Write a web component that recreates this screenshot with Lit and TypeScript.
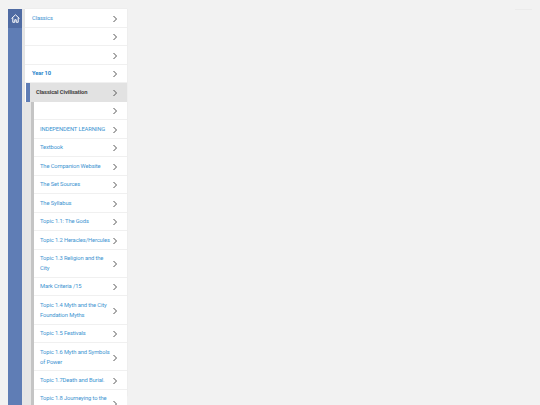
import { LitElement, html, css } from "lit";
import { customElement } from "lit/decorators.js";

const sub = ["", "INDEPENDENT LEARNING", "Textbook", "The Companion Website", "The Set Sources", "The Syllabus", "Topic 1.1: The Gods", "Topic 1.2 Heracles/Hercules", "Topic 1.3 Religion and the City", "Mark Criteria /15", "Topic 1.4 Myth and the City Foundation Myths", "Topic 1.5 Festivals", "Topic 1.6 Myth and Symbols of Power", "Topic 1.7Death and Burial.", "Topic 1.8 Journeying to the Underworld"];

const chev = html`<svg class="chev" viewBox="0 0 6 8" width="6" height="8"><path d="M1.5 1 L4.5 4 L1.5 7" fill="none" stroke="#555" stroke-width="1"/></svg>`;

@customElement("app-root")
export class AppRoot extends LitElement {
  static styles = css`
    :host { display: block; position: relative; height: 405px; overflow: hidden; background: #f2f2f2; font-family: "Roboto", "Noto Sans", sans-serif; }
    .page { display: flex; padding: 9px 0 0 8px; height: 396px; box-sizing: border-box; }
    .rail { width: 14px; background: #5f7db5; flex: none; height: 600px; }
    .home { height: 19px; background: #4f6ba3; display: flex; align-items: center; justify-content: center; }
    .gut { width: 3px; background: #e6e6e6; height: 600px; flex: none; }
    .panel { width: 102px; flex: none; background: #fff; box-shadow: 0 0 1px #ddd; }
    .row { display: flex; align-items: center; justify-content: space-between; height: 18.5px; box-sizing: border-box; border-bottom: 1px solid #f0f0f0; padding: 1.6px 9px 0 7px; font-size: 5.8px; letter-spacing: -0.12px; line-height: 9.8px; color: #3d94d1; }
    .bold { font-weight: 700; color: #2a86cc; }
    .active { background: #e2e2e2; margin-left: 1px; border-left: 4px solid #5f7db5; padding-left: 6px; color: #444; font-weight: 700; border-bottom: none; }
    .nested { display: flex; background: #e6e6e6; }
    .strip { width: 2.5px; margin-left: 6px; background: #c4c4c4; flex: none; }
    .list { flex: 1; background: #fff; min-width: 0; }
    .list .row { height: auto; min-height: 18.5px; padding: 4.65px 9px 3.05px 6.5px; }
    .list .t { max-width: 71px; }
    .chev { flex: none; }
    .faint { position: absolute; left: 515px; top: 9px; width: 17px; height: 1px; background: #ebebeb; }
  `;
  render() {
    return html`<div class="page">
      <div class="rail"><div class="home">
        <svg viewBox="0 0 10 10" width="9" height="9"><path d="M.6 5 L5 .9 L9.4 5 M2 4.2 V9.2 H4.2 V6.4 H5.8 V9.2 H8 V4.2" fill="none" stroke="#fff" stroke-width="1.1"/></svg>
      </div></div>
      <div class="gut"></div>
      <div class="panel">
        <div class="row"><span>Classics</span>${chev}</div>
        <div class="row"><span></span>${chev}</div>
        <div class="row"><span></span>${chev}</div>
        <div class="row bold"><span>Year 10</span>${chev}</div>
        <div class="row active"><span>Classical Civilisation</span>${chev}</div>
        <div class="nested"><div class="strip"></div><div class="list">
          ${sub.map((s) => html`<div class="row"><span class="t">${s}</span>${chev}</div>`)}
        </div></div>
      </div>
    </div><div class="faint"></div>`;
  }
}
